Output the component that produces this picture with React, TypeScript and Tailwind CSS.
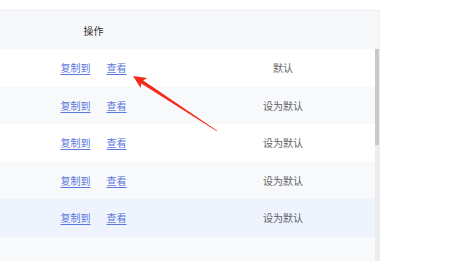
const rows = [
  { label: "默认", bg: "bg-white" },
  { label: "设为默认", bg: "bg-[#f8f9fb]" },
  { label: "设为默认", bg: "bg-white" },
  { label: "设为默认", bg: "bg-[#f8f9fb]" },
  { label: "设为默认", bg: "bg-[#eef3fe]" },
];

function Arrow() {
  // red pointer drawn over the table, tip at the "查看" link
  return (
    <svg className="absolute left-0 top-0 pointer-events-none" width="457" height="261" viewBox="0 0 457 261">
      <polygon
        points="133,76 147.2,78.1 143.2,80.5 217.2,130.75 216.8,131.25 141.2,83.5 140.6,88.1"
        fill="#f62a1c"
      />
    </svg>
  );
}

export default function App() {
  return (
    <div
      className="relative w-[457px] h-[261px] bg-white overflow-hidden text-[10px]"
      style={{ fontFamily: '"Noto Sans CJK SC", "Noto Sans", sans-serif' }}
    >
      <div className="mt-[10px] w-[380px] border-t border-r border-[#ebeef3]">
        <div className="flex h-[38px] items-center bg-[#f7f8fa]">
          <div className="w-[187px] text-center text-[#303133]">操作</div>
          <div className="flex-1" />
        </div>
        <div className="flex">
          <div className="flex-1">
            {rows.map((r, i) => (
              <div key={i} className={`flex h-[37.5px] items-center ${r.bg}`}>
                <div className="flex w-[187px] justify-center gap-[16px] text-[#5a78de]">
                  <span className="underline underline-offset-2">复制到</span>
                  <span className="underline underline-offset-2">查看</span>
                </div>
                <div className="flex-1 pl-[4px] text-center text-[#606266]">{r.label}</div>
              </div>
            ))}
            <div className="h-[40px] bg-[#f8f9fb]" />
          </div>
          <div className="w-[4px] bg-[#ececec]">
            <div className="h-[96px] bg-[#c9c9c9]" />
          </div>
        </div>
      </div>
      <Arrow />
    </div>
  );
}
